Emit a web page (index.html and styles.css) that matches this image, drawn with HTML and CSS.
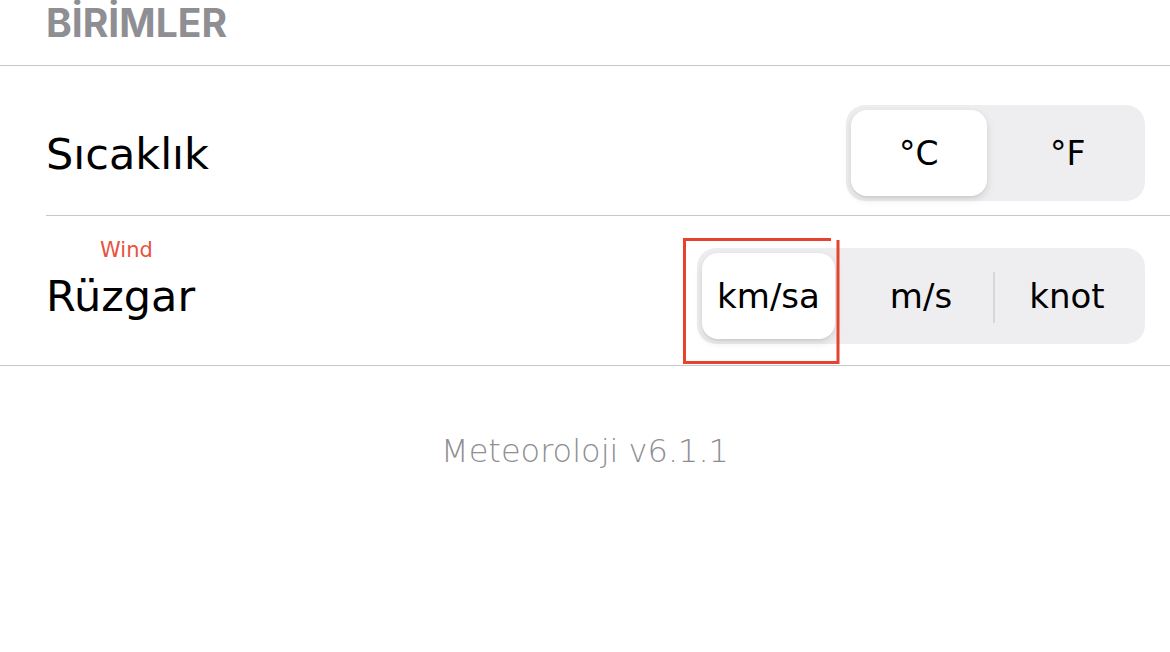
FILE: index.html
```html
<!DOCTYPE html>
<html lang="tr">
<head>
<meta charset="utf-8">
<title>Birimler</title>
<link rel="stylesheet" href="styles.css">
</head>
<body>
<div class="page">
  <header class="section-head">
    <h2 class="section-title">BİRİMLER</h2>
  </header>
  <div class="list">
    <div class="row row-temp">
      <span class="row-label">Sıcaklık</span>
      <div class="seg seg-two">
        <div class="seg-item is-selected">°C</div>
        <div class="seg-item">°F</div>
      </div>
    </div>
    <div class="row row-wind">
      <span class="note">Wind</span>
      <span class="row-label">Rüzgar</span>
      <div class="seg seg-three">
        <svg class="mark" width="165" height="135" viewBox="0 0 165 135" aria-hidden="true">
          <line x1="4.5" y1="3" x2="4.5" y2="129" />
          <line x1="3" y1="4.5" x2="151" y2="4.5" />
          <line x1="158" y1="5" x2="158" y2="129" />
          <line x1="3" y1="127.5" x2="159" y2="127.5" />
        </svg>
        <div class="seg-item is-selected">km/sa</div>
        <div class="seg-item">m/s</div>
        <div class="seg-item has-divider">knot</div>
      </div>
    </div>
  </div>
  <p class="version">Meteoroloji v6.1.1</p>
</div>
</body>
</html>
```
FILE: styles.css
```css
html, body {
  margin: 0;
  padding: 0;
  background: #ffffff;
}

body {
  font-family: "DejaVu Sans", "Noto Sans", sans-serif;
  color: #000000;
  width: 1170px;
  height: 652px;
  overflow: hidden;
}

.page {
  display: flex;
  flex-direction: column;
}

.section-head {
  height: 66px;
  box-sizing: border-box;
  padding: 3px 0 0 46px;
  border-bottom: 1px solid #c8c8cc;
}

.section-title {
  margin: 0;
  font-family: "Inter", "Liberation Sans", sans-serif;
  font-weight: 700;
  font-size: 39px;
  line-height: 39px;
  color: #8e8e93;
}

.list {
  display: flex;
  flex-direction: column;
  border-bottom: 1px solid #c8c8cc;
}

.row {
  position: relative;
  display: flex;
  align-items: center;
  justify-content: space-between;
  box-sizing: border-box;
  margin-left: 46px;
  padding-right: 25px;
}

.row-temp {
  height: 150px;
  padding-top: 39px;
  padding-bottom: 14px;
  border-bottom: 1px solid #c8c8cc;
}

.row-wind {
  height: 149px;
  padding-top: 32px;
  padding-bottom: 21px;
}

.row-label {
  font-size: 43px;
  line-height: 1.164;
  color: #000000;
}

.row-temp .row-label {
  margin-top: 2px;
}

.note {
  position: absolute;
  left: 54px;
  top: 24px;
  font-size: 21px;
  line-height: 21px;
  color: #e8523f;
}

.seg {
  position: relative;
  display: grid;
  height: 96px;
  box-sizing: border-box;
  padding: 5px;
  background: #eeeef0;
  border-radius: 19px;
}

.seg-two {
  width: 299px;
  grid-template-columns: 1fr 1fr;
}

.seg-three {
  width: 448px;
  grid-template-columns: 1fr 1fr 1fr;
}

.seg-item {
  position: relative;
  display: flex;
  align-items: center;
  justify-content: center;
  font-size: 34px;
  color: #000000;
  border-radius: 16px;
}

.seg-two .seg-item {
  font-size: 33px;
}

.seg-item.is-selected {
  background: #ffffff;
  box-shadow: 0 3px 8px rgba(0, 0, 0, 0.12), 0 2px 1px rgba(0, 0, 0, 0.04);
}

.seg-two .seg-item.is-selected {
  margin-right: 9px;
}

.seg-three .seg-item.is-selected {
  margin-right: 13px;
}

.seg-item.has-divider::before {
  content: "";
  position: absolute;
  left: -1px;
  top: 19px;
  width: 2px;
  height: 51px;
  background: #d6d6da;
  border-radius: 1px;
}

.mark {
  position: absolute;
  left: -17px;
  top: -13px;
  z-index: 2;
  stroke: #e5432d;
  stroke-width: 3;
  fill: none;
}

.version {
  margin: 66px 0 0;
  text-align: center;
  font-family: "DejaVu Sans ExtraLight", "DejaVu Sans", sans-serif;
  font-weight: 200;
  font-size: 32px;
  color: #8e8e93;
}
```
